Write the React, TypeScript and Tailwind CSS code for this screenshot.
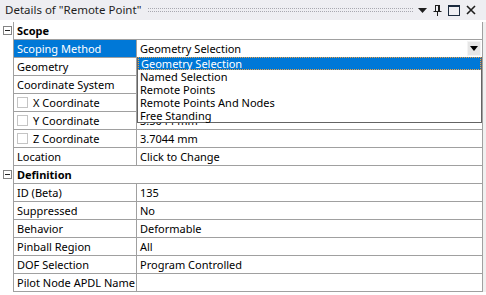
import React from "react";

const FONT = { fontFamily: '"Noto Sans", "Open Sans", sans-serif' };

function Minus() {
  return (
    <div className="mt-[4px] ml-[3px] w-[9px] h-[9px] border border-[#848484] bg-white flex items-center justify-center">
      <div className="w-[5px] h-[1px] bg-[#222]" />
    </div>
  );
}

function Section({ label }: { label: string }) {
  return (
    <div className="flex h-[18px]">
      <div className="w-[13px] shrink-0">
        <Minus />
      </div>
      <div className="w-[470px] shrink-0 box-border border-l border-r border-b border-[#a0a0a0] pl-[3px] flex items-center font-bold text-[#000]">
        {label}
      </div>
      <div className="w-[3px] shrink-0 bg-[#f0f0f0]" />
    </div>
  );
}

function Check() {
  return <div className="w-[11px] h-[11px] border border-[#c4c4c4] bg-white mr-[5px] shrink-0" />;
}

function Row({
  label,
  value,
  selected,
  check,
  dropdown,
}: {
  label: string;
  value?: string;
  selected?: boolean;
  check?: boolean;
  dropdown?: boolean;
}) {
  return (
    <div className="flex h-[18px]">
      <div className="w-[13px] shrink-0" />
      <div
        className={
          "w-[124px] shrink-0 box-border border-l border-r border-b border-[#a0a0a0] pl-[3px] flex items-center whitespace-nowrap overflow-hidden " +
          (selected ? "bg-[#0078d7] text-white" : "text-[#000]")
        }
      >
        {check && <Check />}
        {label}
      </div>
      <div className="w-[346px] shrink-0 box-border border-r border-b border-[#a0a0a0] pl-[3px] flex items-center whitespace-nowrap text-[#000]">
        <span className="flex-1">{value}</span>
        {dropdown && (
          <div className="w-[14px] h-[15px] mr-[1px] bg-[#e6e6e6] border border-[#f4f4f4] flex items-center justify-center">
            <svg width="8" height="5" viewBox="0 0 8 5">
              <path d="M0 0H8L4 5Z" fill="#000" />
            </svg>
          </div>
        )}
      </div>
      <div className="w-[3px] shrink-0 bg-[#f0f0f0]" />
    </div>
  );
}

export default function App() {
  const items = [
    "Geometry Selection",
    "Named Selection",
    "Remote Points",
    "Remote Points And Nodes",
    "Free Standing",
  ];
  return (
    <div className="relative w-[486px] h-[295px] bg-white overflow-hidden text-[11px] leading-none" style={FONT}>
      {/* header */}
      <div className="h-[20px] bg-[#eeeef2] flex items-center text-[11.5px] text-[#1e1e1e]">
        <span className="pl-[5px] whitespace-nowrap">Details of "Remote Point"</span>
        <div className="flex-1 ml-[6px] mr-[5px] h-[4px] border-t border-b border-dotted border-[#a8a8b0]" />
        <div className="flex items-center gap-[6px] pr-[10px]">
          <svg width="9" height="5" viewBox="0 0 9 5">
            <path d="M0 0H9L4.5 5Z" fill="#1e1e1e" />
          </svg>
          <svg width="9" height="11" viewBox="0 0 9 11">
            <path d="M2 0.5H7M2.5 0.5V6M6.5 0.5V6M0.5 6.5H8.5M4.5 6.5V11" stroke="#1e1e1e" strokeWidth="1" fill="none" />
            <path d="M5.5 1V6" stroke="#1e1e1e" strokeWidth="1" />
          </svg>
          <svg width="12" height="11" viewBox="0 0 12 11">
            <rect x="0.5" y="0.5" width="11" height="10" fill="none" stroke="#1b2a3e" strokeWidth="1" />
            <path d="M0.5 1.5H11.5" stroke="#1b2a3e" strokeWidth="1" />
          </svg>
          <svg width="10" height="10" viewBox="0 0 10 10">
            <path d="M1 1L9 9M9 1L1 9" stroke="#1e1e1e" strokeWidth="1.6" />
          </svg>
        </div>
      </div>
      <div className="h-[2px]" />
      <Section label="Scope" />
      <Row label="Scoping Method" value="Geometry Selection" selected dropdown />
      <Row label="Geometry" value="" />
      <Row label="Coordinate System" value="" />
      <Row label="X Coordinate" value="" check />
      <Row label="Y Coordinate" value="3.5044 mm" check />
      <Row label="Z Coordinate" value="3.7044 mm" check />
      <Row label="Location" value="Click to Change" />
      <Section label="Definition" />
      <Row label="ID (Beta)" value="135" />
      <Row label="Suppressed" value="No" />
      <Row label="Behavior" value="Deformable" />
      <Row label="Pinball Region" value="All" />
      <Row label="DOF Selection" value="Program Controlled" />
      <Row label="Pilot Node APDL Name" value="" />

      {/* dropdown popup */}
      <div className="absolute left-[137px] top-[57px] w-[345px] box-border border-l border-r border-b border-[#646464] bg-white">
        {items.map((it, i) => (
          <div
            key={it}
            className={
              "h-[13px] box-border pl-[2px] flex items-center whitespace-nowrap " +
              (i === 0
                ? "bg-[#0078d7] text-white border border-dotted border-[#f0a040] pl-[1px]"
                : "text-[#000]")
            }
          >
            {it}
          </div>
        ))}
      </div>
    </div>
  );
}
